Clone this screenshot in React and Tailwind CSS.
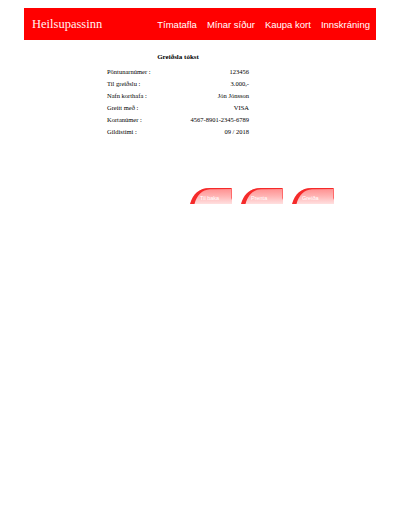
import React from "react";

const rows = [
  ["Pöntunarnúmer :", "123456"],
  ["Til greiðslu :", "3.000,-"],
  ["Nafn korthafa :", "Jón Jónsson"],
  ["Greitt með :", "VISA"],
  ["Kortanúmer :", "4567-8901-2345-6789"],
  ["Gildistími :", "09 / 2018"],
];

function TabButton({ label, id }) {
  return (
    <button className="relative w-[42px] h-[16px]">
      <svg className="absolute inset-0" width="42" height="16" viewBox="0 0 42 16">
        <defs>
          <linearGradient id={id} x1="0" y1="0" x2="0" y2="1">
            <stop offset="0" stopColor="#ff8c8c" />
            <stop offset="0.5" stopColor="#ffb3b3" />
            <stop offset="1" stopColor="#ffe0e0" />
          </linearGradient>
        </defs>
        <path d="M0 16 C3 6 9 0 20 0 L42 0 L42 16 Z" fill={`url(#${id})`} />
        <path d="M0 16 C3 6 9 0 20 0 L42 0 L42 1 L20 1.2 C12 1.6 7 7 4.5 16 Z" fill="#f52a2a" />
        <path d="M41 0 L42 0 L42 12 L41 10 Z" fill="#ff6a6a" />
      </svg>
      <span className="relative block pl-[10px] pt-[4px] text-left text-[5.5px] leading-[8px] text-white font-['Liberation_Sans',sans-serif]">
        {label}
      </span>
    </button>
  );
}

export default function App() {
  return (
    <div className="w-[400px] h-[515px] bg-white pt-[8px]">
      {/* Header */}
      <div className="mx-[24px] h-[32px] bg-[#ff0000] flex items-center justify-between pl-[8px] pr-[6px]">
        <span className="text-[12.5px] text-[#fff2f2] font-['Liberation_Serif',serif]">Heilsupassinn</span>
        <nav className="flex items-center gap-[10px] pt-[3px] text-[9.5px] text-white font-['Liberation_Sans',sans-serif]">
          <span>Tímatafla</span>
          <span>Mínar síður</span>
          <span>Kaupa kort</span>
          <span>Innskráning</span>
        </nav>
      </div>

      {/* Receipt */}
      <div className="w-[142px] ml-[107px] mt-[12px] font-['Liberation_Serif',serif] text-black">
        <div className="text-center text-[7px] font-bold leading-[10px] mb-[4px]">Greiðsla tókst</div>
        {rows.map(([k, v]) => (
          <div key={k} className="flex justify-between text-[6.5px] leading-[12px]">
            <span>{k}</span>
            <span>{v}</span>
          </div>
        ))}
      </div>

      {/* Buttons */}
      <div className="flex gap-[9px] ml-[190px] mt-[50px]">
        <TabButton id="g1" label="Til baka" />
        <TabButton id="g2" label="Prenta" />
        <TabButton id="g3" label="Greiða" />
      </div>
    </div>
  );
}
